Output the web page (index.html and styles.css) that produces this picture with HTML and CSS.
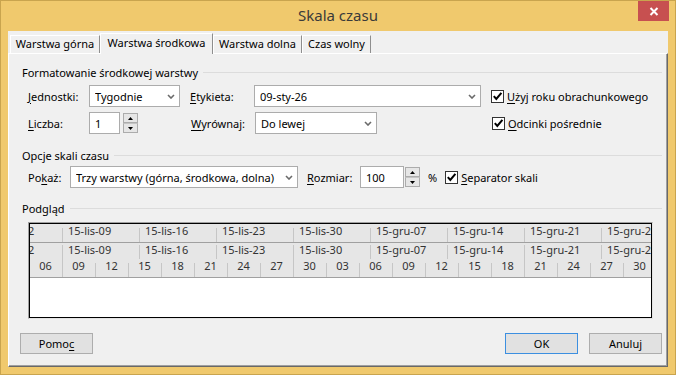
FILE: index.html
```html
<!DOCTYPE html>
<html lang="pl">
<head>
<meta charset="utf-8">
<title>Skala czasu</title>
<link rel="stylesheet" href="styles.css">
</head>
<body>
<div class="window">
  <div class="titlebar">
    <span class="title">Skala czasu</span>
    <div class="close"><svg width="10" height="9" viewBox="0 0 10 9"><path d="M1.5 1 L8.5 8 M8.5 1 L1.5 8" stroke="#fff" stroke-width="2" fill="none"/></svg></div>
  </div>
  <div class="client">
    <div class="tabs">
      <div class="tab t1">Warstwa górna</div>
      <div class="tab active t2">Warstwa środkowa</div>
      <div class="tab t3">Warstwa dolna</div>
      <div class="tab t4">Czas wolny</div>
    </div>
    <div class="panel">
      <div class="group"><span>Formatowanie środkowej warstwy</span><i class="rule"></i></div>

      <div class="row r1">
        <span class="lbl w61"><u>J</u>ednostki:</span>
        <div class="select w91"><span class="val">Tygodnie</span><svg class="chev" width="8" height="5" viewBox="0 0 8 5"><path d="M1 1 L4 4 L7 1" stroke="#6a6a6a" stroke-width="1.6" fill="none"/></svg></div>
        <span class="lbl w64 ml10"><u>E</u>tykieta:</span>
        <div class="select w227"><span class="val">09-sty-26</span><svg class="chev" width="8" height="5" viewBox="0 0 8 5"><path d="M1 1 L4 4 L7 1" stroke="#6a6a6a" stroke-width="1.6" fill="none"/></svg></div>
        <label class="check ml10"><span class="box"><svg width="11" height="11" viewBox="0 0 11 11"><path d="M1.8 5.2 L4.3 8 L9.4 1.8" stroke="#000" stroke-width="2" fill="none"/></svg></span><span><u>U</u>żyj roku obrachunkowego</span></label>
      </div>

      <div class="row r2">
        <span class="lbl w61"><u>L</u>iczba:</span>
        <div class="field w31"><span class="val">1</span></div>
        <div class="spin ml3">
          <span class="sb"><svg width="5" height="3" viewBox="0 0 5 3"><path d="M0 3 L2.5 0 L5 3Z" fill="#000"/></svg></span>
          <span class="sb"><svg width="5" height="3" viewBox="0 0 5 3"><path d="M0 0 L2.5 3 L5 0Z" fill="#000"/></svg></span>
        </div>
        <span class="lbl w64 ml53"><u>W</u>yrównaj:</span>
        <div class="select w122"><span class="val">Do lewej</span><svg class="chev" width="8" height="5" viewBox="0 0 8 5"><path d="M1 1 L4 4 L7 1" stroke="#6a6a6a" stroke-width="1.6" fill="none"/></svg></div>
        <label class="check ml115"><span class="box"><svg width="11" height="11" viewBox="0 0 11 11"><path d="M1.8 5.2 L4.3 8 L9.4 1.8" stroke="#000" stroke-width="2" fill="none"/></svg></span><span><u>O</u>dcinki pośrednie</span></label>
      </div>

      <div class="group g2"><span>Opcje skali czasu</span><i class="rule"></i></div>

      <div class="row r3">
        <span class="lbl w42">Po<u>k</u>aż:</span>
        <div class="select w228"><span class="val">Trzy warstwy (górna, środkowa, dolna)</span><svg class="chev" width="8" height="5" viewBox="0 0 8 5"><path d="M1 1 L4 4 L7 1" stroke="#6a6a6a" stroke-width="1.6" fill="none"/></svg></div>
        <span class="lbl w53 ml9"><u>R</u>ozmiar:</span>
        <div class="field w44"><span class="val">100</span></div>
        <div class="spin ml1">
          <span class="sb"><svg width="5" height="3" viewBox="0 0 5 3"><path d="M0 3 L2.5 0 L5 3Z" fill="#000"/></svg></span>
          <span class="sb"><svg width="5" height="3" viewBox="0 0 5 3"><path d="M0 0 L2.5 3 L5 0Z" fill="#000"/></svg></span>
        </div>
        <span class="lbl pct">%</span>
        <label class="check ml8"><span class="box"><svg width="11" height="11" viewBox="0 0 11 11"><path d="M1.8 5.2 L4.3 8 L9.4 1.8" stroke="#000" stroke-width="2" fill="none"/></svg></span><span><u>S</u>eparator skali</span></label>
      </div>

      <div class="group g3"><span>Podgląd</span><i class="rule"></i></div>

      <div class="preview">
        <div class="canvas">
          <div class="tier top">
            <span class="wk">15-lis-02</span><span class="wk">15-lis-09</span><span class="wk">15-lis-16</span><span class="wk">15-lis-23</span><span class="wk">15-lis-30</span><span class="wk">15-gru-07</span><span class="wk">15-gru-14</span><span class="wk">15-gru-21</span><span class="wk">15-gru-28</span>
          </div>
          <div class="tier mid">
            <span class="wk">15-lis-02</span><span class="wk">15-lis-09</span><span class="wk">15-lis-16</span><span class="wk">15-lis-23</span><span class="wk">15-lis-30</span><span class="wk">15-gru-07</span><span class="wk">15-gru-14</span><span class="wk">15-gru-21</span><span class="wk">15-gru-28</span>
          </div>
          <div class="tier bot">
            <span class="dy">06</span><span class="dy full">09</span><span class="dy">12</span><span class="dy">15</span><span class="dy">18</span><span class="dy">21</span><span class="dy">24</span><span class="dy">27</span><span class="dy full">30</span><span class="dy">03</span><span class="dy">06</span><span class="dy">09</span><span class="dy">12</span><span class="dy">15</span><span class="dy">18</span><span class="dy full">21</span><span class="dy">24</span><span class="dy">27</span><span class="dy">30</span>
          </div>
        </div>
      </div>

      <div class="buttons">
        <div class="btn">Pomo<u>c</u></div>
        <div class="btn default push">OK</div>
        <div class="btn">Anuluj</div>
      </div>
    </div>
  </div>
</div>
</body>
</html>
```

FILE: styles.css
```css
* { box-sizing: border-box; }
html, body { margin: 0; padding: 0; }
body {
  width: 676px;
  height: 375px;
  overflow: hidden;
  background: #f0c96d;
  font-family: "Segoe UI", "Noto Sans", "Open Sans", sans-serif;
  font-size: 11px;
  color: #000;
}
u { text-decoration: underline; text-underline-offset: 2px; }

.window {
  width: 676px;
  height: 375px;
  border: 1px solid #c9a44e;
  display: flex;
  flex-direction: column;
}

.titlebar {
  position: relative;
  height: 30px;
  display: flex;
  align-items: center;
  justify-content: center;
}
.title {
  font-size: 15px;
  color: #3a3a3a;
  margin-top: -2px;
}
.close {
  position: absolute;
  top: 0;
  right: 6px;
  width: 31px;
  height: 20px;
  background: #c75050;
  display: flex;
  align-items: center;
  justify-content: center;
}

.client {
  flex: 1;
  margin: 0 7px 7px 7px;
  background: #f0f0f0;
  display: flex;
  flex-direction: column;
  padding-top: 2px;
}

.tabs {
  height: 20px;
  display: flex;
  align-items: flex-end;
  padding-left: 2px;
  position: relative;
  z-index: 2;
}
.tab {
  height: 18px;
  line-height: 16px;
  text-align: center;
  background: #f0f0f0;
  border-top: 1px solid #fff;
  border-left: 1px solid #fff;
  border-right: 1px solid #8e8e8e;
  white-space: nowrap;
}
.tab.active {
  height: 21px;
  margin-bottom: -1px;
  line-height: 17px;
  padding-bottom: 2px;
}
.t1 { width: 90px; }
.t2 { width: 113px; }
.t3 { width: 89px; }
.t4 { width: 69px; }

.panel {
  flex: 1;
  border-top: 1px solid #fff;
  border-left: 1px solid #fff;
  border-right: 1px solid #696969;
  border-bottom: 1px solid #696969;
  box-shadow: inset -1px -1px 0 #a0a0a0;
  padding-top: 10px;
  display: flex;
  flex-direction: column;
}

.group {
  height: 16px;
  display: flex;
  align-items: center;
  padding-left: 13px;
  margin-right: 5px;
  white-space: nowrap;
}
.group .rule {
  flex: 1;
  height: 1px;
  background: #dcdcdc;
  margin-left: 5px;
}
.g2 { margin-top: 13px; }
.g3 { margin-top: 12px; }

.row {
  height: 22px;
  display: flex;
  align-items: center;
  margin-left: 19px;
  white-space: nowrap;
}
.r1 { margin-top: 5px; }
.r2 { margin-top: 5px; }
.r3 { margin-top: 3px; }

.lbl { display: inline-block; }
.w61 { width: 61px; }
.w64 { width: 64px; }
.w42 { width: 42px; }
.w53 { width: 53px; }
.w91 { width: 91px; }
.w227 { width: 227px; }
.w122 { width: 122px; }
.w228 { width: 228px; }
.w31 { width: 31px; }
.w44 { width: 44px; }
.ml1 { margin-left: 1px; }
.ml3 { margin-left: 3px; }
.ml8 { margin-left: 8px; }
.ml9 { margin-left: 9px; }
.ml10 { margin-left: 10px; }
.ml53 { margin-left: 53px; }
.ml115 { margin-left: 115px; }
.pct { margin-left: 8px; }

.select, .field {
  height: 22px;
  background: #fff;
  border: 1px solid #acacac;
  display: flex;
  align-items: center;
  padding-left: 5px;
}
.select .val { flex: 1; overflow: hidden; }
.select .chev { margin-right: 4px; }

.spin {
  width: 15px;
  height: 20px;
  display: flex;
  flex-direction: column;
  gap: 0;
}
.sb {
  flex: 1;
  background: #e6e6e6;
  border: 1px solid #acacac;
  display: flex;
  align-items: center;
  justify-content: center;
}
.sb + .sb { border-top: 1px solid #c4c4c4; }

.check {
  display: flex;
  align-items: center;
  gap: 3px;
}
.box {
  width: 13px;
  height: 13px;
  border: 1px solid #333;
  background: #fff;
  display: flex;
}

.preview {
  margin-top: 6px;
  margin-left: 19px;
  width: 625px;
  height: 97px;
  border: 1px solid;
  border-color: #a0a0a0 #e3e3e3 #e3e3e3 #a0a0a0;
}
.canvas {
  height: 95px;
  border: 1px solid #000;
  background: #fff;
  overflow: hidden;
  color: #333;
}
.tier {
  display: flex;
  background: #e6e6e6;
  white-space: nowrap;
}
.tier.top {
  height: 19px;
  border-bottom: 1px solid #a0a0a0;
  margin-left: -45px;
}
.tier.mid {
  height: 16px;
  margin-left: -45px;
}
.tier.bot {
  height: 19px;
  border-bottom: 1px solid #a0a0a0;
  margin-left: -1px;
}
.wk {
  flex: 0 0 77px;
  padding-left: 6px;
  line-height: 13px;
  background: linear-gradient(#c6c6c6, #c6c6c6) no-repeat 0 4px / 1px 14px;
}
.mid .wk {
  line-height: 14px;
  background-position: 0 2px;
}
.dy {
  flex: 0 0 33px;
  text-align: center;
  line-height: 14px;
  background: linear-gradient(#c6c6c6, #c6c6c6) no-repeat 0 4px / 1px 14px;
}
.dy.full {
  background-position: 0 0;
  background-size: 1px 18px;
}

.buttons {
  margin-top: 14px;
  display: flex;
  padding: 0 5px 0 11px;
  gap: 11px;
}
.btn {
  width: 73px;
  height: 21px;
  line-height: 19px;
  text-align: center;
  background: #e1e1e1;
  border: 1px solid #adadad;
}
.btn.default { border-color: #3c8fe0; }
.btn.push { margin-left: auto; }
```
